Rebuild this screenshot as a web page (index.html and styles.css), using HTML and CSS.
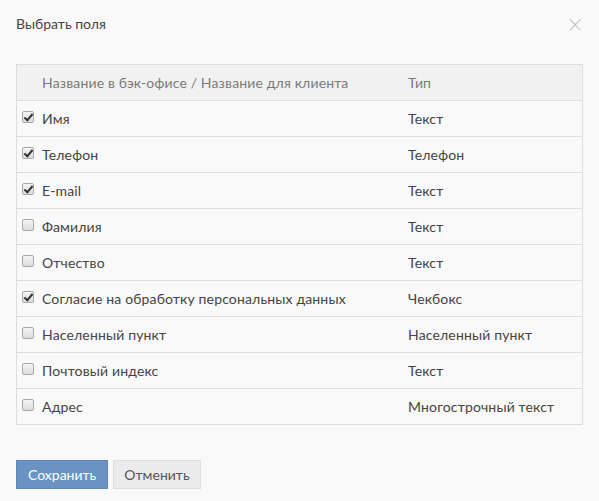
FILE: index.html
```html
<!doctype html>
<html lang="ru">
<head>
    <meta charset="utf-8">
    <title>Выбрать поля</title>
    <link rel="stylesheet" href="styles.css">
</head>
<body>
    <div class="modal">
        <div class="modal-head">
            <span class="modal-title">Выбрать поля</span>
            <span class="modal-close">&times;</span>
        </div>

        <table class="fields">
            <tr class="fields-head">
                <th class="col-check"></th>
                <th class="col-name">Название в бэк-офисе / Название для клиента</th>
                <th class="col-type">Тип</th>
            </tr>
            <tr>
                <td class="col-check"><input type="checkbox" checked></td>
                <td>Имя</td>
                <td>Текст</td>
            </tr>
            <tr>
                <td class="col-check"><input type="checkbox" checked></td>
                <td>Телефон</td>
                <td>Телефон</td>
            </tr>
            <tr>
                <td class="col-check"><input type="checkbox" checked></td>
                <td>E-mail</td>
                <td>Текст</td>
            </tr>
            <tr>
                <td class="col-check"><input type="checkbox"></td>
                <td>Фамилия</td>
                <td>Текст</td>
            </tr>
            <tr>
                <td class="col-check"><input type="checkbox"></td>
                <td>Отчество</td>
                <td>Текст</td>
            </tr>
            <tr>
                <td class="col-check"><input type="checkbox" checked></td>
                <td>Согласие на обработку персональных данных</td>
                <td>Чекбокс</td>
            </tr>
            <tr>
                <td class="col-check"><input type="checkbox"></td>
                <td>Населенный пункт</td>
                <td>Населенный пункт</td>
            </tr>
            <tr>
                <td class="col-check"><input type="checkbox"></td>
                <td>Почтовый индекс</td>
                <td>Текст</td>
            </tr>
            <tr>
                <td class="col-check"><input type="checkbox"></td>
                <td>Адрес</td>
                <td>Многострочный текст</td>
            </tr>
        </table>

        <div class="modal-foot">
            <button class="btn btn-save">Сохранить</button>
            <button class="btn btn-cancel">Отменить</button>
        </div>
    </div>
</body>
</html>
```

FILE: styles.css
```css
html, body {
    margin: 0;
    background-color: #f9f9f9;
}
body {
    font-family: Lato, "Open Sans", sans-serif;
    font-size: 14px;
    letter-spacing: 0.15px;
    color: #444;
}
.modal {
    padding: 0 16px;
}
.modal-head {
    display: flex;
    justify-content: space-between;
    align-items: center;
    height: 46px;
}
.modal-title {
    font-size: 14px;
    letter-spacing: 0;
    color: #444;
}
.modal-close {
    font-size: 27px;
    font-weight: 300;
    color: #c4c4c4;
    line-height: 1;
}
.fields {
    margin-top: 18px;
    width: 100%;
    border-collapse: collapse;
    border: 1px solid #dddddd;
}
.fields th,
.fields td {
    height: 35px;
    padding: 0;
    text-align: left;
    vertical-align: middle;
    border-top: 1px solid #dddddd;
}
.fields th {
    font-weight: normal;
    color: #7a7a7a;
    background-color: #f1f1f1;
}
.fields .col-check {
    width: 20px;
    padding-left: 5px;
}
.fields .col-name {
    width: 366px;
}
.fields input {
    appearance: none;
    -webkit-appearance: none;
    margin: 0;
    width: 12px;
    height: 12px;
    border: 1px solid #a9a9a9;
    border-radius: 2px;
    background: linear-gradient(#f4f4f4, #dcdcdc);
    vertical-align: middle;
    position: relative;
    top: -3px;
}
.fields input:checked::after {
    content: "";
    position: absolute;
    left: 3px;
    top: 0px;
    width: 3px;
    height: 7px;
    border: solid #333;
    border-width: 0 2px 2px 0;
    transform: rotate(40deg);
}
.modal-foot {
    display: flex;
    gap: 5px;
    margin-top: 35px;
}
.btn {
    font-family: inherit;
    font-size: 14px;
    height: 29px;
    padding: 0 11px;
    border: 1px solid transparent;
}
.btn-save {
    background-color: #6a93c3;
    border-color: #5f88b8;
    color: #fff;
}
.btn-cancel {
    padding: 0 10px;
    background-color: #ebebeb;
    border-color: #dedede;
    color: #555;
}
```
